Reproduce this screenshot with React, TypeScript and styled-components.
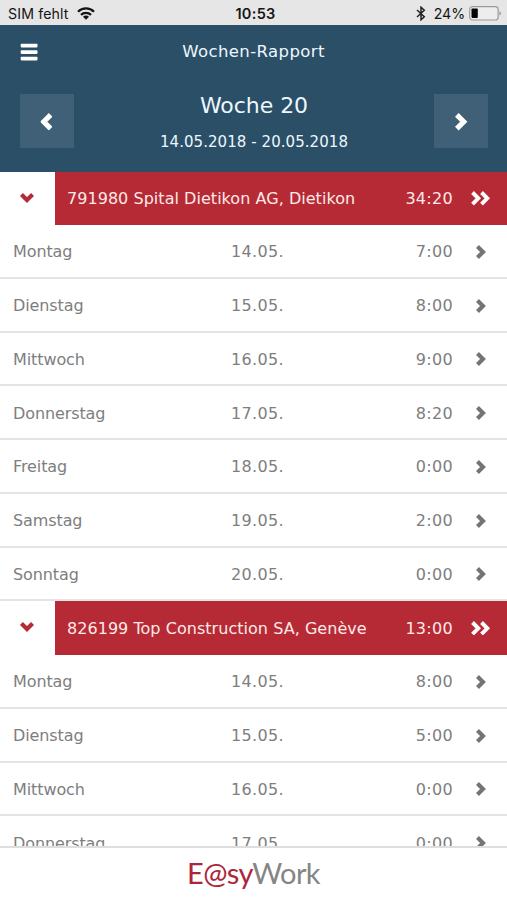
import React from "react";
import styled, { createGlobalStyle } from "styled-components";

const GlobalStyle = createGlobalStyle`
  * { box-sizing: border-box; }
  html, body { margin: 0; padding: 0; background: #fff; }
  button { border: 0; padding: 0; background: none; font: inherit; color: inherit; }
`;

const Screen = styled.div`
  width: 507px;
  height: 900px;
  display: flex;
  flex-direction: column;
  overflow: hidden;
  background: #fff;
  font-family: "DejaVu Sans", Verdana, sans-serif;
`;

const StatusBar = styled.div`
  flex: none;
  height: 25px;
  display: grid;
  grid-template-columns: 1fr auto 1fr;
  align-items: center;
  padding: 2px 5px 0 8px;
  background: #e6e6e6;
  color: #151515;
  font: 14.2px/20px Inter, sans-serif;
`;

const StatusGroup = styled.div<{ $end?: boolean }>`
  display: flex;
  align-items: center;
  justify-content: ${(p) => (p.$end ? "flex-end" : "flex-start")};
`;

const Carrier = styled.span`
  letter-spacing: 0.12px;
  margin-right: 8px;
`;

const Clock = styled.span`
  padding-left: 1px;
  font-weight: 600;
  font-size: 14.5px;
  letter-spacing: 0.3px;
`;

const Charge = styled.span`
  margin: 0 4px 0 8px;
  letter-spacing: -0.1px;
`;

const Header = styled.header`
  flex: none;
  height: 147px;
  background: #2b4f66;
  color: #edf7ff;
`;

const TitleBar = styled.div`
  height: 52px;
  display: grid;
  grid-template-columns: 58px 1fr 58px;
  align-items: center;
`;

const MenuButton = styled.button`
  display: flex;
  padding: 1px 0 0 20px;
`;

const Title = styled.h1`
  margin: 0;
  text-align: center;
  font-size: 16.5px;
  font-weight: 400;
  letter-spacing: 0.4px;
`;

const WeekBar = styled.div`
  display: flex;
  justify-content: space-between;
  padding: 17px 19px 0 20px;
`;

const StepButton = styled.button<{ $back?: boolean }>`
  width: 54px;
  height: 54px;
  display: flex;
  align-items: center;
  justify-content: center;
  padding: ${(p) => (p.$back ? "2px 2px 0 0" : "2px 0 0 1px")};
  background: #3f6076;
  color: #fff;
`;

const WeekInfo = styled.div`
  text-align: center;
  white-space: nowrap;
`;

const WeekName = styled.div`
  font-size: 22px;
  line-height: 24px;
  letter-spacing: -0.05px;
`;

const WeekRange = styled.div`
  margin-top: 14px;
  font-size: 15px;
  line-height: 20px;
  letter-spacing: 0.06px;
`;

const List = styled.main`
  flex: 1;
  min-height: 0;
  overflow: hidden;
  font-size: 16px;
  letter-spacing: -0.1px;
  white-space: nowrap;
`;

const GroupRow = styled.div<{ $first?: boolean }>`
  height: ${(p) => (p.$first ? "53px" : "53.75px")};
  display: grid;
  grid-template-columns: 55px 1fr;
`;

const Toggle = styled.button`
  display: flex;
  align-items: center;
  justify-content: center;
  padding: 0 2px 2px 0;
  color: #b42a36;
`;

const GroupBar = styled.div`
  display: flex;
  align-items: center;
  justify-content: space-between;
  padding: 0 16px 0 12px;
  background: #b62a36;
  color: #ffe9e6;
`;

const GroupName = styled.span`
  letter-spacing: 0.04px;
`;

const GroupTotal = styled.div`
  display: flex;
  align-items: center;
  gap: 18px;
  letter-spacing: 0.3px;
`;

const DayRow = styled.div`
  height: 53.75px;
  display: grid;
  grid-template-columns: 218px 1fr auto 33px;
  align-items: center;
  padding: 2px 21px 0 13px;
  border-bottom: 2px solid #e4e4e4;
  color: #7e7e7e;
`;

const Figure = styled.span`
  letter-spacing: 0.35px;
`;

const DayArrow = styled.span`
  display: flex;
  justify-content: flex-end;
  color: #747474;
`;

const Footer = styled.footer`
  flex: none;
  height: 54px;
  border-top: 2px solid #dedede;
  display: flex;
  justify-content: center;
  background: #fff;
`;

const Logo = styled.div`
  font: 400 29px/49px Lato, sans-serif;
  color: #858585;
  letter-spacing: -0.65px;
`;

const LogoAccent = styled.span`
  color: #ac2539;
`;

type Direction = "left" | "right" | "down";

const Arrow = styled.svg<{ $dir: Direction }>`
  display: block;
  flex: none;
  transform: rotate(${(p) => ({ left: 180, right: 0, down: 90 })[p.$dir]}deg);
`;

function Chevron({ dir = "right", size = 14 }: { dir?: Direction; size?: number }) {
  return (
    <Arrow $dir={dir} width={(size * 9.7) / 13.6} height={size} viewBox="0 0 9.7 13.6">
      <path d="M1.42 1.42 6.8 6.8 1.42 12.18" fill="none" stroke="currentColor" strokeWidth="4" />
    </Arrow>
  );
}

function DoubleChevron() {
  return (
    <svg width="20" height="14.6" viewBox="0 0 20 14.6">
      <path d="M1.5 1.5 7.3 7.3 1.5 13.1M10.5 1.5 16.3 7.3 10.5 13.1" fill="none" stroke="#fff" strokeWidth="3.9" />
    </svg>
  );
}

function Wifi() {
  return (
    <svg width="18" height="13" viewBox="0 0 18 13">
      <g fill="none" stroke="#151515" strokeWidth="2.3">
        <path d="M1 4.7a11.3 11.3 0 0 1 16 0" />
        <path d="M4 7.9a7 7 0 0 1 10 0" />
      </g>
      <path d="M6 9.8a4.2 4.2 0 0 1 6 0L9 12.8z" fill="#151515" />
    </svg>
  );
}

function Bluetooth() {
  return (
    <svg width="10" height="15" viewBox="0 0 10 15">
      <path d="M1 4l7.3 6.8L5 13.8V1.2l3.3 3L1 11" fill="none" stroke="#222" strokeWidth="1.5" />
    </svg>
  );
}

function Battery() {
  return (
    <svg width="33" height="15" viewBox="0 0 33 15">
      <rect x=".7" y=".6" width="28.4" height="13.4" rx="2.8" fill="#ededed" stroke="#9b9b9b" strokeWidth="1.2" />
      <rect x="2.5" y="2.5" width="6.3" height="9.4" rx=".8" fill="#050505" />
      <path d="M30.4 5.3q1.6.6 1.6 2.1t-1.6 2.1z" fill="#9b9b9b" />
    </svg>
  );
}

function MenuIcon() {
  return (
    <svg width="18" height="18" viewBox="0 0 18 18" fill="#fff">
      <rect x=".7" y=".7" width="16.8" height="3.7" rx=".8" />
      <rect x=".7" y="7.2" width="16.8" height="3.7" rx=".8" />
      <rect x=".7" y="13.7" width="16.8" height="3.7" rx=".8" />
    </svg>
  );
}

interface Project {
  name: string;
  total: string;
  days: [string, string, string][];
}

const projects: Project[] = [
  {
    name: "791980 Spital Dietikon AG, Dietikon",
    total: "34:20",
    days: [
      ["Montag", "14.05.", "7:00"],
      ["Dienstag", "15.05.", "8:00"],
      ["Mittwoch", "16.05.", "9:00"],
      ["Donnerstag", "17.05.", "8:20"],
      ["Freitag", "18.05.", "0:00"],
      ["Samstag", "19.05.", "2:00"],
      ["Sonntag", "20.05.", "0:00"],
    ],
  },
  {
    name: "826199 Top Construction SA, Genève",
    total: "13:00",
    days: [
      ["Montag", "14.05.", "8:00"],
      ["Dienstag", "15.05.", "5:00"],
      ["Mittwoch", "16.05.", "0:00"],
      ["Donnerstag", "17.05.", "0:00"],
    ],
  },
];

export default function App() {
  return (
    <Screen>
      <GlobalStyle />
      <StatusBar>
        <StatusGroup>
          <Carrier>SIM fehlt</Carrier>
          <Wifi />
        </StatusGroup>
        <Clock>10:53</Clock>
        <StatusGroup $end>
          <Bluetooth />
          <Charge>24%</Charge>
          <Battery />
        </StatusGroup>
      </StatusBar>
      <Header>
        <TitleBar>
          <MenuButton aria-label="Menü">
            <MenuIcon />
          </MenuButton>
          <Title>Wochen-Rapport</Title>
        </TitleBar>
        <WeekBar>
          <StepButton $back aria-label="Vorherige Woche">
            <Chevron dir="left" size={17.5} />
          </StepButton>
          <WeekInfo>
            <WeekName>Woche 20</WeekName>
            <WeekRange>14.05.2018 - 20.05.2018</WeekRange>
          </WeekInfo>
          <StepButton aria-label="Nächste Woche">
            <Chevron size={17.5} />
          </StepButton>
        </WeekBar>
      </Header>
      <List>
        {projects.map((project, index) => (
          <React.Fragment key={project.name}>
            <GroupRow $first={index === 0}>
              <Toggle aria-label="Zuklappen">
                <Chevron dir="down" />
              </Toggle>
              <GroupBar>
                <GroupName>{project.name}</GroupName>
                <GroupTotal>
                  <span>{project.total}</span>
                  <DoubleChevron />
                </GroupTotal>
              </GroupBar>
            </GroupRow>
            {project.days.map(([day, date, hours]) => (
              <DayRow key={day}>
                <span>{day}</span>
                <Figure>{date}</Figure>
                <Figure>{hours}</Figure>
                <DayArrow>
                  <Chevron />
                </DayArrow>
              </DayRow>
            ))}
          </React.Fragment>
        ))}
      </List>
      <Footer>
        <Logo>
          <LogoAccent>E@sy</LogoAccent>Work
        </Logo>
      </Footer>
    </Screen>
  );
}
